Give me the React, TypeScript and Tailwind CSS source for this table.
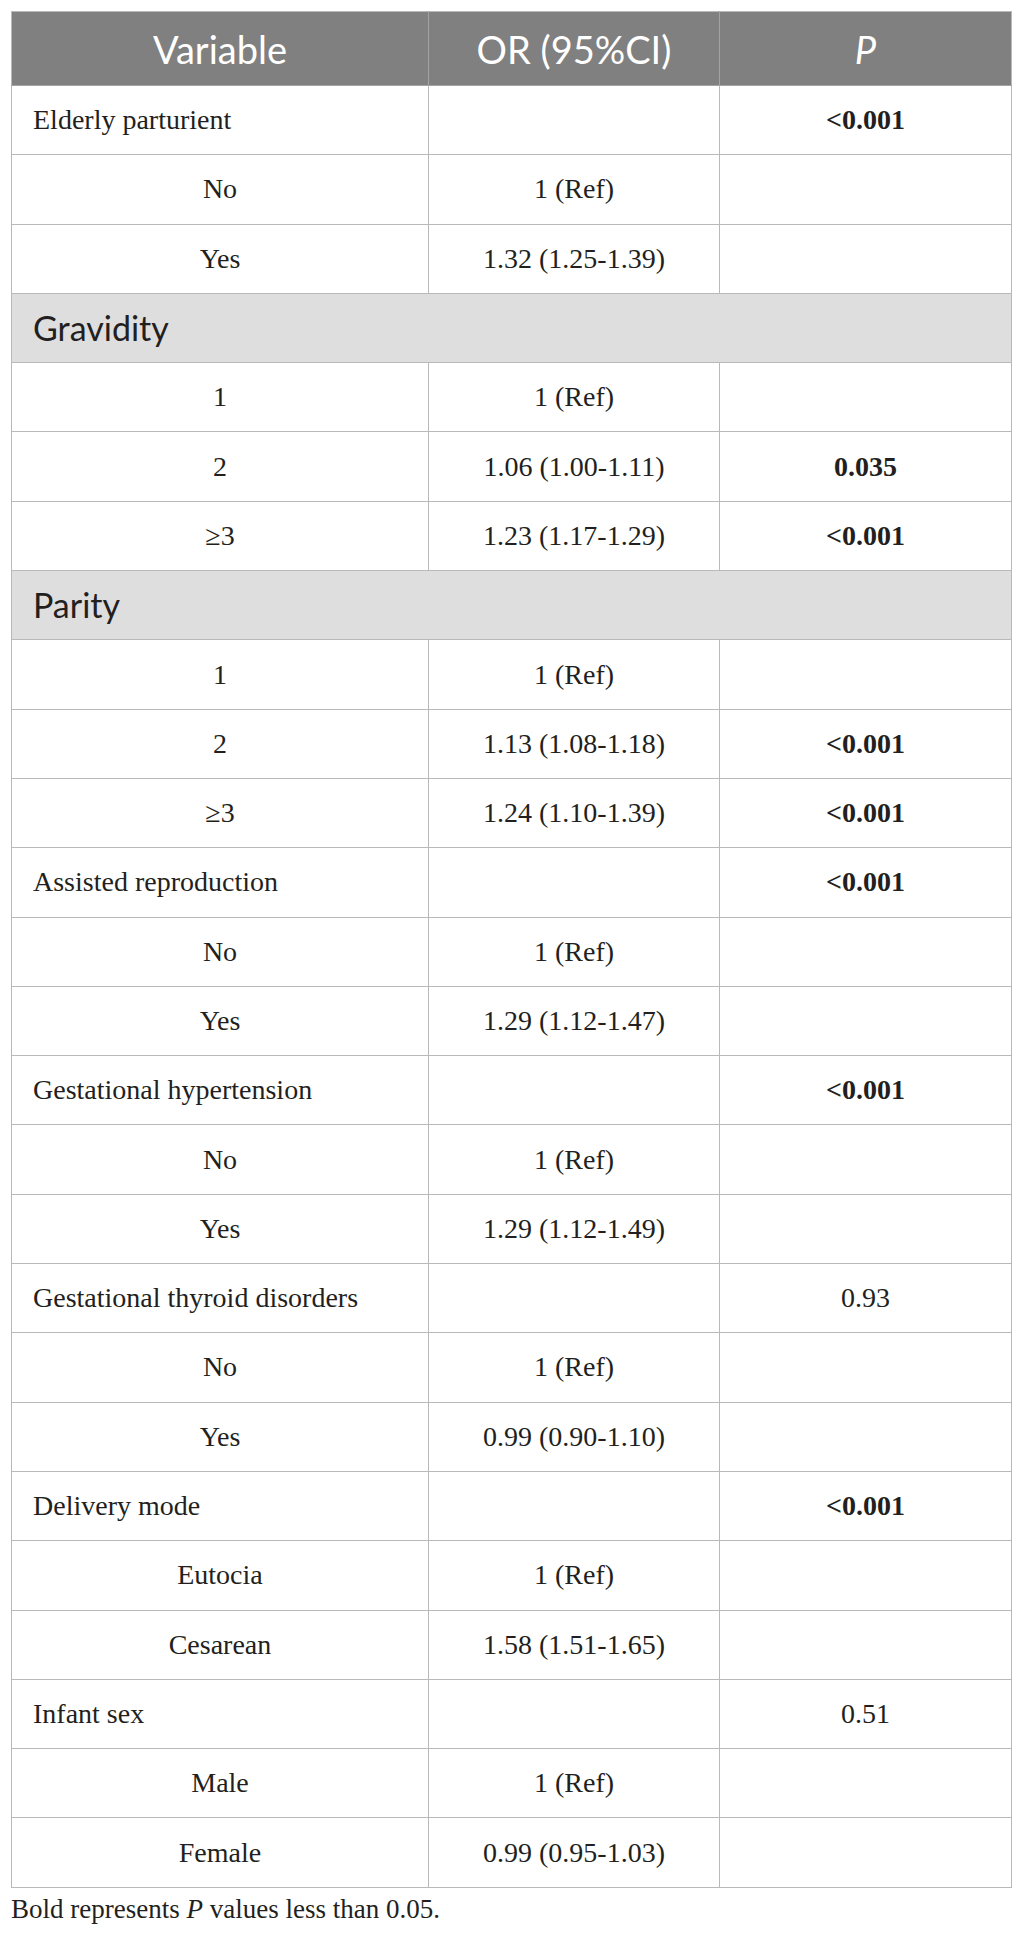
type Row =
  | { kind: "section"; label: string }
  | { kind: "group"; label: string; p?: string; bold?: boolean }
  | { kind: "sub"; label: string; or: string; p?: string; bold?: boolean };

const ROWS: Row[] = [
  { kind: "group", label: "Elderly parturient", p: "<0.001", bold: true },
  { kind: "sub", label: "No", or: "1 (Ref)" },
  { kind: "sub", label: "Yes", or: "1.32 (1.25-1.39)" },
  { kind: "section", label: "Gravidity" },
  { kind: "sub", label: "1", or: "1 (Ref)" },
  { kind: "sub", label: "2", or: "1.06 (1.00-1.11)", p: "0.035", bold: true },
  { kind: "sub", label: "≥3", or: "1.23 (1.17-1.29)", p: "<0.001", bold: true },
  { kind: "section", label: "Parity" },
  { kind: "sub", label: "1", or: "1 (Ref)" },
  { kind: "sub", label: "2", or: "1.13 (1.08-1.18)", p: "<0.001", bold: true },
  { kind: "sub", label: "≥3", or: "1.24 (1.10-1.39)", p: "<0.001", bold: true },
  { kind: "group", label: "Assisted reproduction", p: "<0.001", bold: true },
  { kind: "sub", label: "No", or: "1 (Ref)" },
  { kind: "sub", label: "Yes", or: "1.29 (1.12-1.47)" },
  { kind: "group", label: "Gestational hypertension", p: "<0.001", bold: true },
  { kind: "sub", label: "No", or: "1 (Ref)" },
  { kind: "sub", label: "Yes", or: "1.29 (1.12-1.49)" },
  { kind: "group", label: "Gestational thyroid disorders", p: "0.93" },
  { kind: "sub", label: "No", or: "1 (Ref)" },
  { kind: "sub", label: "Yes", or: "0.99 (0.90-1.10)" },
  { kind: "group", label: "Delivery mode", p: "<0.001", bold: true },
  { kind: "sub", label: "Eutocia", or: "1 (Ref)" },
  { kind: "sub", label: "Cesarean", or: "1.58 (1.51-1.65)" },
  { kind: "group", label: "Infant sex", p: "0.51" },
  { kind: "sub", label: "Male", or: "1 (Ref)" },
  { kind: "sub", label: "Female", or: "0.99 (0.95-1.03)" },
];

const serif = "font-['Minion_Pro','Liberation_Serif',serif]";
const sans = "font-['Lato','Open_Sans',sans-serif]";
const cell = "border border-[#b9b9b9] h-[69.3px] p-0 align-middle";

export default function App() {
  return (
    <div className="w-[1026px] min-h-[1940px] bg-white pt-[11px] pl-[11px] text-[#231f20]">
      <table className="w-[1000px] border-collapse table-fixed">
        <colgroup>
          <col className="w-[417px]" />
          <col className="w-[291px]" />
          <col className="w-[292px]" />
        </colgroup>
        <thead>
          {/* Header band */}
          <tr className={`bg-[#808080] text-white ${sans} text-[38px] leading-none`}>
            <th className="h-[74px] font-normal text-center border border-[#a3a3a3] border-l-[#b9b9b9] border-t-[#b9b9b9]">
              Variable
            </th>
            <th className="h-[74px] font-normal text-center border border-[#a3a3a3] border-t-[#b9b9b9]">
              OR (95%CI)
            </th>
            <th className="h-[74px] font-normal italic text-center border border-[#a3a3a3] border-t-[#b9b9b9] border-r-[#b9b9b9]">
              P
            </th>
          </tr>
        </thead>
        <tbody className={`${serif} text-[28px] leading-none`}>
          {ROWS.map((r, i) => {
            if (r.kind === "section") {
              return (
                <tr key={i} className="bg-[#dedede]">
                  <td colSpan={3} className={`${cell} ${sans} text-[34px] pl-[21px]`}>
                    {r.label}
                  </td>
                </tr>
              );
            }
            if (r.kind === "group") {
              return (
                <tr key={i}>
                  <td className={`${cell} pl-[21px]`}>{r.label}</td>
                  <td className={cell}></td>
                  <td className={`${cell} text-center ${r.bold ? "font-bold" : ""}`}>{r.p}</td>
                </tr>
              );
            }
            return (
              <tr key={i}>
                <td className={`${cell} text-center`}>{r.label}</td>
                <td className={`${cell} text-center`}>{r.or}</td>
                <td className={`${cell} text-center ${r.bold ? "font-bold" : ""}`}>{r.p}</td>
              </tr>
            );
          })}
        </tbody>
      </table>

      {/* Footnote */}
      <p className={`${serif} text-[27px] leading-none mt-[8px]`}>
        Bold represents <span className="italic">P</span> values less than 0.05.
      </p>
    </div>
  );
}
